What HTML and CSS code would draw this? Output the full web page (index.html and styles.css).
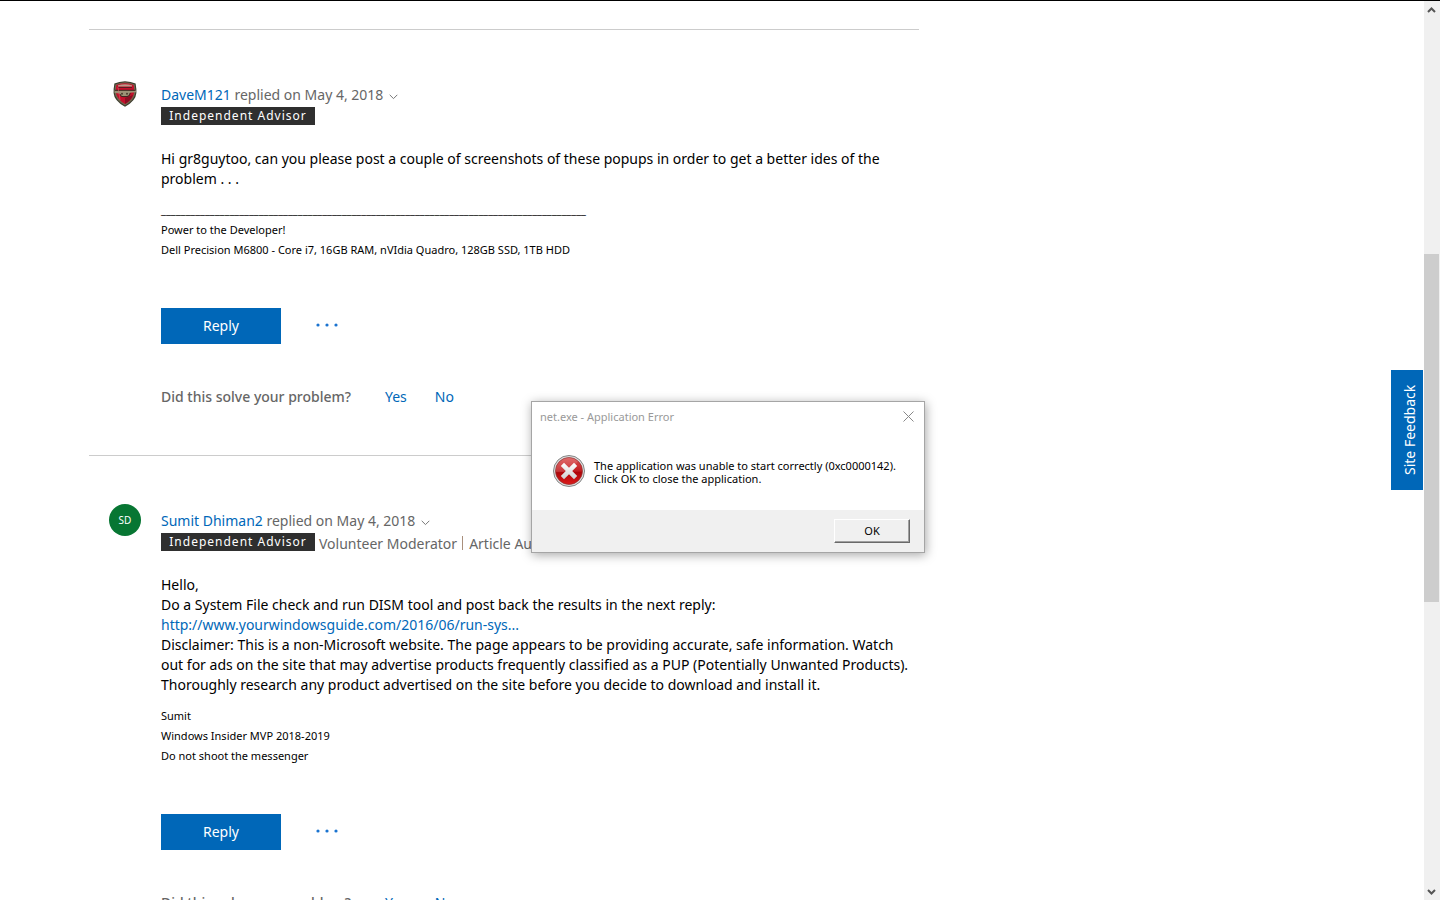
FILE: index.html
```html
<!DOCTYPE html>
<html lang="en">
<head>
<meta charset="utf-8">
<title>Application Error popups - Community</title>
<link rel="stylesheet" href="styles.css">
</head>
<body>
<div class="window">
  <main class="thread">
    <article class="post">
      <div class="avatar">
        <svg width="24" height="26" viewBox="0 0 24 26" role="img" aria-label="DaveM121">
          <path d="M12 0.3 Q18 0.5 22.6 2.6 Q23.6 8 23.4 12 Q22.8 20 12 25.7 Q1.2 20 0.6 12 Q0.4 8 1.4 2.6 Q6 0.5 12 0.3Z" fill="#3b3a2c"/>
          <path d="M12 1.3 Q17.5 1.5 21.7 3.4 Q22.6 8 22.3 12 Q21.5 19 12 24.6 Q2.5 19 1.7 12 Q1.4 8 2.3 3.4 Q6.5 1.5 12 1.3Z" fill="#6f6a50"/>
          <path d="M12 2.3 Q17 2.4 20.6 4 Q21.4 8 21.1 12 Q20 18.3 12 23 Q4 18.3 2.9 12 Q2.6 8 3.4 4 Q7 2.4 12 2.3Z" fill="#c40f2b"/>
          <path d="M12 17 L20 14 Q18 19.5 12 23Z" fill="#8b0d22"/>
          <path d="M5 4.200 Q12 2.500 19 4.200 V5.600 H5Z" fill="#b99a88"/>
          <path d="M5 6.5 H19" stroke="#5a1c20" stroke-width="1"/>
          <path d="M1.5 9.5 L13 9 L23 9.8 V11.3 L17 11.8 Q17 15.5 13 15 L9 15.3 Q6.5 15 6.5 12.5 L1.500 12Z" fill="#9b9175"/>
          <path d="M2 9.3 H22 M7 13 Q7.5 16 10 15.6 L14 15.6 Q17 15.5 17.2 12" stroke="#39271f" stroke-width="1" fill="none"/>
          <circle cx="9" cy="12.7" r="1" fill="#4a3c2e"/><circle cx="14" cy="12.7" r="1" fill="#4a3c2e"/>
          <path d="M5 6 L7 19" stroke="#ef6a76" stroke-width="1" opacity=".5"/>
        </svg>
      </div>
      <div class="content">
        <div class="byline"><span><a href="#">DaveM121</a> replied on May 4, 2018</span>
          <svg class="chevron" width="9" height="6" viewBox="0 0 9 6"><path d="M.7.8 4.5 4.6 8.3.8"/></svg></div>
        <div class="roles"><span class="badge">Independent Advisor</span></div>
        <p class="text">Hi gr8guytoo, can you please post a couple of screenshots of these popups in order to get a better ides of the<br>problem . . .</p>
        <p class="signature">_______________________________________________________________________________________<br>Power to the Developer!<br>Dell Precision M6800 - Core i7, 16GB RAM, nVIdia Quadro, 128GB SSD, 1TB HDD</p>
        <div class="actions">
          <button class="reply">Reply</button>
          <button class="more" aria-label="More"><svg width="24" height="4" viewBox="0 0 24 4"><circle cx="2" cy="2" r="1.6"/><circle cx="11" cy="2" r="1.6"/><circle cx="20" cy="2" r="1.6"/></svg></button>
        </div>
        <div class="solved"><span class="question">Did this solve your problem?</span><a href="#">Yes</a><a href="#">No</a></div>
      </div>
    </article>
    <article class="post">
      <div class="avatar"><span class="initials">SD</span></div>
      <div class="content">
        <div class="byline"><span><a href="#">Sumit Dhiman2</a> replied on May 4, 2018</span>
          <svg class="chevron" width="9" height="6" viewBox="0 0 9 6"><path d="M.7.8 4.5 4.6 8.3.8"/></svg></div>
        <div class="roles"><span class="badge">Independent Advisor</span><span>Volunteer Moderator</span><span class="bar"></span><span>Article Author</span></div>
        <p class="text">Hello,<br>Do a System File check and run DISM tool and post back the results in the next reply:<br><a href="#">http://www.yourwindowsguide.com/2016/06/run-sys...</a><br>Disclaimer: This is a non-Microsoft website. The page appears to be providing accurate, safe information. Watch<br>out for ads on the site that may advertise products frequently classified as a PUP (Potentially Unwanted Products).<br>Thoroughly research any product advertised on the site before you decide to download and install it.</p>
        <p class="signature">Sumit<br>Windows Insider MVP 2018-2019<br>Do not shoot the messenger</p>
        <div class="actions">
          <button class="reply">Reply</button>
          <button class="more" aria-label="More"><svg width="24" height="4" viewBox="0 0 24 4"><circle cx="2" cy="2" r="1.6"/><circle cx="11" cy="2" r="1.6"/><circle cx="20" cy="2" r="1.6"/></svg></button>
        </div>
        <div class="solved"><span class="question">Did this solve your problem?</span><a href="#">Yes</a><a href="#">No</a></div>
      </div>
    </article>
  </main>
  <div class="scrollbar">
    <svg width="15" height="17" viewBox="0 0 15 17"><path d="M4 11 7.5 7.5 11 11"/></svg>
    <div class="rail"><div class="thumb"></div></div>
    <svg width="15" height="17" viewBox="0 0 15 17"><path d="M4 7 7.5 10.5 11 7"/></svg>
  </div>
  <button class="feedback">Site Feedback</button>
  <section class="dialog" role="dialog" aria-labelledby="dialog-title">
    <header class="titlebar">
      <span id="dialog-title">net.exe - Application Error</span>
      <button class="close" aria-label="Close"><svg width="11" height="11" viewBox="0 0 11 11"><path d="M.5.5 10.5 10.5M10.5.5.5 10.5"/></svg></button>
    </header>
    <div class="message">
      <svg width="32" height="32" viewBox="0 0 32 32">
        <defs>
          <linearGradient id="red" x1="0" y1="0" x2="0" y2="1"><stop offset="0" stop-color="#dd5353"/><stop offset=".5" stop-color="#c11d20"/><stop offset=".55" stop-color="#ad0508"/><stop offset="1" stop-color="#dc1a1a"/></linearGradient>
          <linearGradient id="cross" x1="0" y1="0" x2="0" y2="1"><stop offset="0" stop-color="#fff"/><stop offset="1" stop-color="#cfcfcf"/></linearGradient>
        </defs>
        <circle cx="16" cy="16" r="15.5" fill="#dedede" stroke="#858585"/>
        <circle cx="16" cy="16" r="13.5" fill="url(#red)" stroke="#8e3030" stroke-width=".7"/>
        <path d="M2.8 17 Q16 19 25 6.5 A13.2 13.2 0 0 0 2.8 17Z" fill="#fff" opacity=".13"/>
        <path d="M11 7.8 16 12.8 21 7.8 24.2 11 19.2 16 24.2 21 21 24.2 16 19.2 11 24.2 7.8 21 12.8 16 7.8 11Z" fill="url(#cross)"/>
      </svg>
      <p>The application was unable to start correctly (0xc0000142).<br>Click OK to close the application.</p>
    </div>
    <footer class="buttons"><button class="ok">OK</button></footer>
  </section>
</div>
</body>
</html>
```
FILE: styles.css
```css
* { box-sizing: border-box; }
body { margin: 0; background: #fff; color: #000; font: 14px/20px "Noto Sans", "Open Sans", sans-serif; }
button { font: inherit; padding: 0; border: 0; background: none; }
a { color: #0067b8; text-decoration: none; }
p { margin: 0; }

.window { position: relative; display: flex; height: 100vh; overflow: hidden; border-top: 1px solid #000; }
.thread { flex: 1; overflow: hidden; padding: 28px 0 0 89px; }

.post { display: flex; max-width: 830px; border-top: 1px solid #ccc; padding: 48px 0 48px 20px; }
.avatar { display: flex; align-items: center; justify-content: center; flex: none; width: 32px; height: 32px; }
.initials { width: 32px; height: 32px; border-radius: 50%; background: #077633; color: #fff; font-size: 10px; line-height: 32px; text-align: center; }
.content { flex: 1; min-width: 0; padding: 7px 0 0 20px; white-space: nowrap; }

.byline { display: flex; align-items: center; gap: 6px; color: #666; }
.chevron { margin-top: 3px; }
.chevron path { fill: none; stroke: #777; }
.roles { display: flex; align-items: flex-start; gap: 4px; height: 20px; margin-top: 2px; color: #666; line-height: 22px; }
.badge { min-width: 154px; height: 18px; padding: 0 7px; background: #2f2f2f; color: #fff; font-size: 12px; line-height: 18px; letter-spacing: 1px; text-align: center; }
.bar { width: 1px; height: 14px; margin: 3px 2px 0 1px; background: #a98f7c; }

.text { margin-top: 22px; }
.signature { margin-top: 11px; font-size: 11px; }
.actions { display: flex; align-items: center; gap: 35px; margin-top: 48px; }
.reply { width: 120px; height: 36px; background: #0067b8; color: #fff; }
.more { display: flex; padding-bottom: 2px; }
.more circle { fill: #1a73d0; }
.solved { display: flex; gap: 28px; margin-top: 43px; }
.question { min-width: 196px; color: #666; font-weight: 500; }

.scrollbar { display: flex; flex-direction: column; width: 16px; background: #f0f0f0; }
.scrollbar path { fill: none; stroke: #555; stroke-width: 2; }
.rail { flex: 1; padding-top: 236px; }
.thumb { width: 15px; height: 348px; background: #cdcdcd; }

.feedback { position: absolute; top: 369px; right: 17px; width: 32px; height: 120px; background: #0067b8; color: #fff; writing-mode: vertical-rl; transform: rotate(180deg); padding-right: 5px; }

.dialog { position: absolute; top: 400px; left: 531px; width: 394px; border: 1px solid #a5a5a5; background: #fff; box-shadow: 1px 2px 10px rgba(0, 0, 0, .35); font-size: 11px; }
.titlebar { display: flex; justify-content: space-between; align-items: center; height: 30px; padding: 0 10px 0 8px; color: #999; }
.close { display: flex; padding-bottom: 2px; }
.close path { fill: none; stroke: #888; }
.message { display: flex; gap: 9px; height: 78px; padding: 23px 21px 0; white-space: nowrap; }
.message svg { flex: none; }
.message p { padding-top: 4px; line-height: 13px; }
.buttons { display: flex; justify-content: flex-end; align-items: center; height: 42px; padding-right: 14px; background: #f0f0f0; }
.ok { width: 76px; height: 24px; border: 1px solid; border-color: #fff #696969 #696969 #fff; background: #f0f0f0; box-shadow: inset -1px -1px #a0a0a0; font-size: 11px; }
```
